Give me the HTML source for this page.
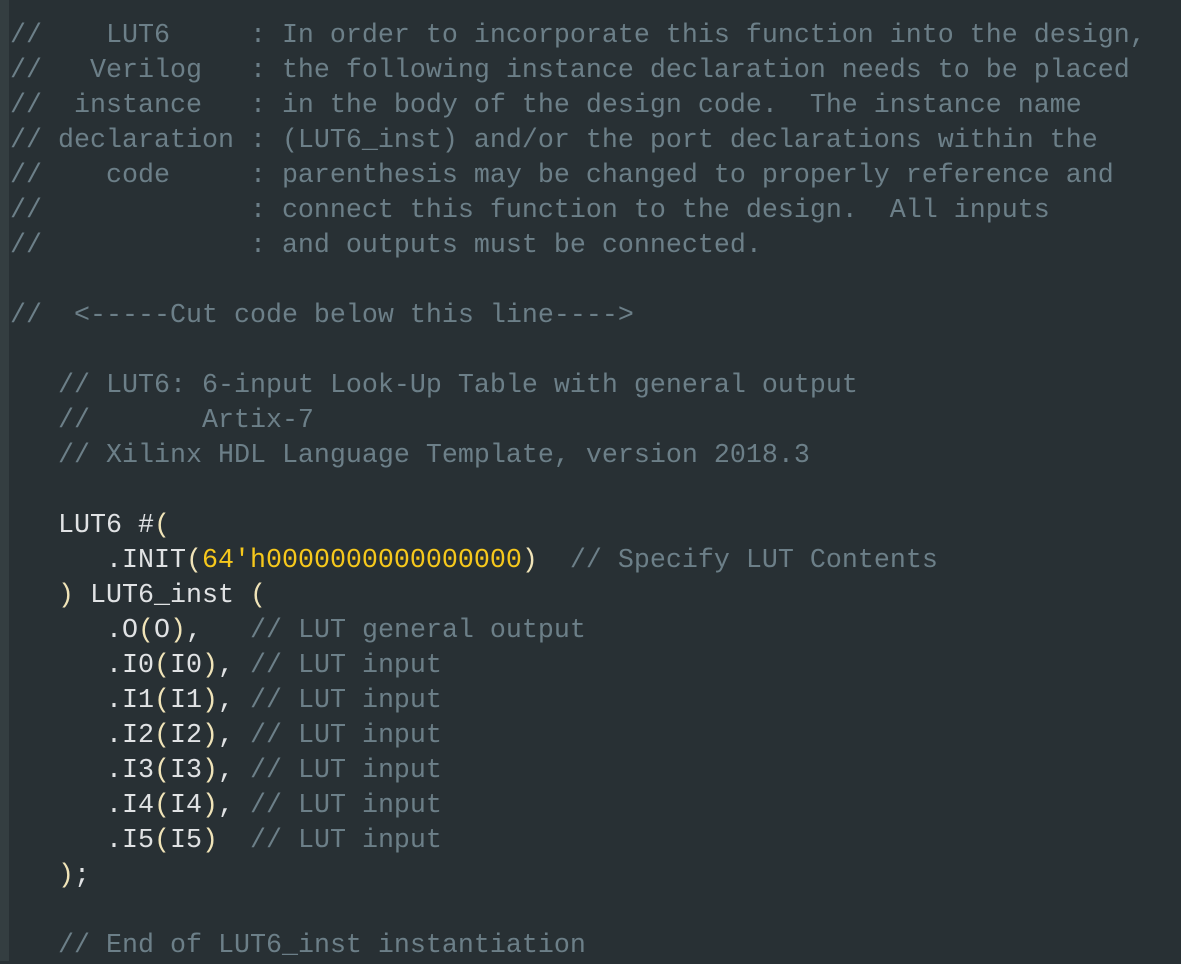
<!DOCTYPE html>
<html><head><style>
html,body{margin:0;padding:0;width:1181px;height:961px;overflow:hidden;background:#283034;}
.g{position:absolute;left:0;top:0;width:9px;height:961px;background:#343e41;}
pre{position:absolute;left:10px;top:19px;margin:0;font-family:"Liberation Mono",monospace;font-size:26.67px;line-height:35px;color:#e0e2e4;white-space:pre;}
.c{color:#6c7f88;}
.y{color:#f6c81c;}
.p{color:#f0e4b8;}
</style></head><body><div class="g"></div>
<pre><span class="c">//    LUT6     : In order to incorporate this function into the design,
//   Verilog   : the following instance declaration needs to be placed
//  instance   : in the body of the design code.  The instance name
// declaration : (LUT6_inst) and/or the port declarations within the
//    code     : parenthesis may be changed to properly reference and
//             : connect this function to the design.  All inputs
//             : and outputs must be connected.

//  &lt;-----Cut code below this line----&gt;</span>

   <span class="c">// LUT6: 6-input Look-Up Table with general output
   //       Artix-7
   // Xilinx HDL Language Template, version 2018.3</span>

   LUT6 #<span class="p">(</span>
      .INIT<span class="p">(</span><span class="y">64'h0000000000000000</span><span class="p">)</span>  <span class="c">// Specify LUT Contents</span>
   <span class="p">)</span> LUT6_inst <span class="p">(</span>
      .O<span class="p">(</span>O<span class="p">)</span>,   <span class="c">// LUT general output</span>
      .I0<span class="p">(</span>I0<span class="p">)</span>, <span class="c">// LUT input</span>
      .I1<span class="p">(</span>I1<span class="p">)</span>, <span class="c">// LUT input</span>
      .I2<span class="p">(</span>I2<span class="p">)</span>, <span class="c">// LUT input</span>
      .I3<span class="p">(</span>I3<span class="p">)</span>, <span class="c">// LUT input</span>
      .I4<span class="p">(</span>I4<span class="p">)</span>, <span class="c">// LUT input</span>
      .I5<span class="p">(</span>I5<span class="p">)</span>  <span class="c">// LUT input</span>
   <span class="p">)</span>;

   <span class="c">// End of LUT6_inst instantiation</span></pre>
</body></html>
